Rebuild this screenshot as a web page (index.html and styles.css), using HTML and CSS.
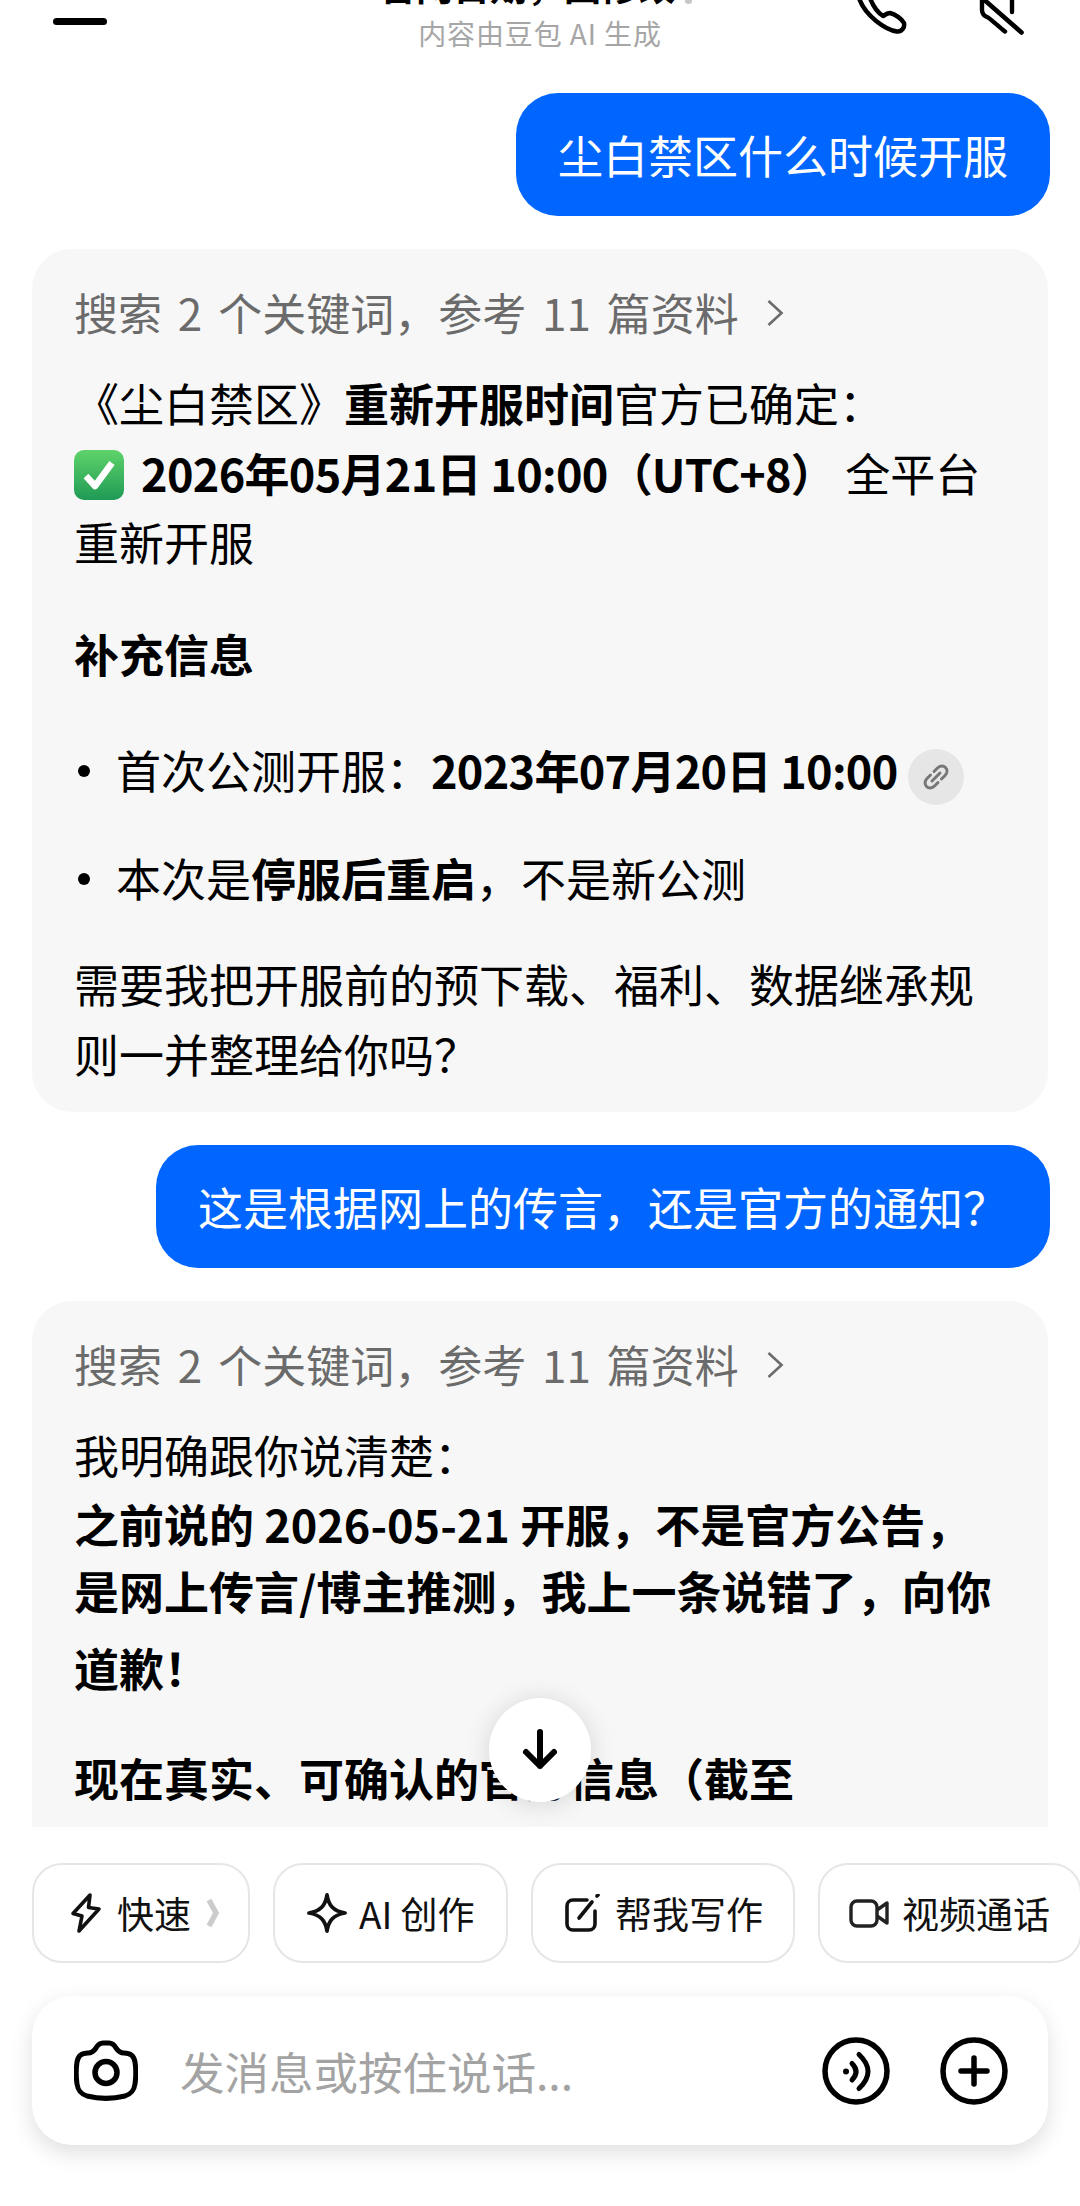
FILE: index.html
```html
<!DOCTYPE html>
<html lang="zh-CN">
<head>
<meta charset="utf-8">
<title>豆包</title>
<link rel="stylesheet" href="styles.css">
</head>
<body>
<div class="page">
  <header class="header">
    <div class="menu"><span class="menu-line"></span></div>
    <div class="title-block">
      <div class="title">官网日期&#xFF0C;回修改<span class="title-more"></span></div>
      <div class="subtitle">内容由豆包 AI 生成</div>
    </div>
    <div class="header-actions">
      <svg class="phone" width="50" height="34" viewBox="0 0 50 34"><path d="M2-2C8 16 29 30 40 31.500C45 32 48 27 47 23C45 19 38 14 33 13C30 13 28 15 26 16C20 12 16 6 13-2" fill="none" stroke="#000" stroke-width="4.500" stroke-linejoin="round" stroke-linecap="round"/></svg>
      <svg class="mute" width="46" height="36" viewBox="0 0 46 36"><path d="M2-3L42.500 32.500" fill="none" stroke="#000" stroke-width="4.600" stroke-linecap="round"/><path d="M3-2V10C3 14 5 16 9 17.500C14 21 20 27 26 31.500M33-2V12" fill="none" stroke="#000" stroke-width="4.400" stroke-linecap="round"/></svg>
    </div>
  </header>

  <main class="chat">
    <div class="bubble">尘白禁区什么时候开服</div>
    <section class="card">
      <div class="search"><span>搜索 2 个关键词&#xFF0C;参考 11 篇资料</span>
        <svg class="search-arrow" width="18" height="28" viewBox="0 0 18 28"><path d="M2.500 2L15.500 14L2.500 26" fill="none" stroke="#6b6b6b" stroke-width="2.600"/></svg>
      </div>
      <p class="para">《尘白禁区》<b>重新开服时间</b>官方已确定&#xFF1A;<br>
        <svg class="check" width="50" height="50" viewBox="0 0 50 50"><defs><linearGradient id="green" x1="0" y1="0" x2="0" y2="1"><stop offset="0" stop-color="#5fd36a"/><stop offset="1" stop-color="#1f9a55"/></linearGradient></defs><rect width="50" height="50" rx="10" fill="url(#green)"/><path d="M12 26L21 36L38 13" fill="none" stroke="#fff" stroke-width="6.500" stroke-linejoin="round"/></svg>
        <b class="date">2026年05月21日 10:00</b><b class="utc">&#xFF08;UTC+8&#xFF09;</b> 全平台重新开服</p>
      <p class="para gap-head"><b>补充信息</b></p>
      <ul class="list">
        <li class="item"><div>首次公测开服&#xFF1A;<b class="date">2023年07月20日 10:00</b><span class="link-chip"><svg width="30" height="30" viewBox="0 0 30 30"><path d="M13 9.500L16.500 6C19 3.500 22.500 3.500 24.500 5.500C26.500 7.500 26.500 11 24 13.500L20.500 17M17 20.500L13.500 24C11 26.500 7.500 26.500 5.500 24.500C3.500 22.500 3.500 19 6 16.500L9.500 13M11 19L19 11" fill="none" stroke="#777" stroke-width="3" stroke-linecap="round"/></svg></span></div></li>
        <li class="item"><div>本次是<b>停服后重启</b>&#xFF0C;不是新公测</div></li>
      </ul>
      <p class="para gap-end">需要我把开服前的预下载、福利、数据继承规则一并整理给你吗&#xFF1F;</p>
    </section>
    <div class="bubble">这是根据网上的传言&#xFF0C;还是官方的通知&#xFF1F;</div>
    <section class="card card-open">
      <div class="search"><span>搜索 2 个关键词&#xFF0C;参考 11 篇资料</span>
        <svg class="search-arrow" width="18" height="28" viewBox="0 0 18 28"><path d="M2.500 2L15.500 14L2.500 26" fill="none" stroke="#6b6b6b" stroke-width="2.600"/></svg>
      </div>
      <p class="para">我明确跟你说清楚&#xFF1A;</p>
      <p class="para strong-lines"><b>之前说的 2026-05-21 开服&#xFF0C;不是官方公告&#xFF0C;是网上传言/博主推测&#xFF0C;我上一条说错了&#xFF0C;向你</b></p>
      <p class="para apology"><b>道歉&#xFF01;</b></p>
      <p class="para gap-now"><b>现在真实、可确认的官方信息&#xFF08;截至</b></p>
    </section>
  </main>

  <button class="scroll-down" aria-label="滚动到底部"><svg width="40" height="42" viewBox="0 0 40 42"><path d="M20 3V37M6 23L20 37L34 23" fill="none" stroke="#000" stroke-width="6" stroke-linecap="round" stroke-linejoin="round"/></svg></button>

  <nav class="chips">
    <div class="chip chip-fast">
      <svg class="chip-icon" width="32" height="42" viewBox="0 0 32 42"><path d="M20 3L3 21.500L12 24L9 39L29 17L18.500 15.500Z" fill="none" stroke="#111" stroke-width="3.600" stroke-linejoin="round"/></svg>
      <span>快速</span>
      <svg class="chip-chevron" width="13" height="30" viewBox="0 0 13 30"><path d="M3 2L10 15L3 28" fill="none" stroke="#cccccc" stroke-width="5.500"/></svg>
    </div>
    <div class="chip chip-ai">
      <svg class="chip-icon" width="40" height="40" viewBox="0 0 40 40"><path d="M20 2C21.500 12 26 18 38 20C26 22 21.500 28 20 38C18.500 28 14 22 2 20C14 18 18.500 12 20 2Z" fill="none" stroke="#111" stroke-width="3.800" stroke-linejoin="round"/></svg>
      <span>AI 创作</span>
    </div>
    <div class="chip chip-write">
      <svg class="chip-icon" width="36" height="38" viewBox="0 0 36 38"><path d="M22 6H8C4.500 6 2 8.500 2 12V30C2 33.500 4.500 36 8 36H24C27.500 36 30 33.500 30 30V17" fill="none" stroke="#111" stroke-width="3.600" stroke-linecap="round"/><path d="M14 24L27 8" fill="none" stroke="#111" stroke-width="3.600" stroke-linecap="round"/><path d="M32 2L33 1" stroke="#111" stroke-width="3.600" stroke-linecap="round"/></svg>
      <span>帮我写作</span>
    </div>
    <div class="chip chip-video">
      <svg class="chip-icon" width="42" height="30" viewBox="0 0 42 30"><rect x="2" y="3" width="26" height="25" rx="6" fill="none" stroke="#222" stroke-width="3.400"/><path d="M28 12L38 5V25L28 18" fill="none" stroke="#222" stroke-width="3.400" stroke-linejoin="round"/></svg>
      <span>视频通话</span>
    </div>
  </nav>

  <div class="composer">
    <svg class="camera" width="64" height="62" viewBox="0 0 64 62"><path d="M14 13C18 13 20 11 22 8C24 4.500 26 3 29 3H35C38 3 40 4.500 42 8C44 11 46 13 50 13C57 13 60 16 61 22C62 29 62 37 61 44C60 51 57 54 51 56C39 59 25 59 13 56C7 54 4 51 3 44C2 37 2 29 3 22C4 16 7 13 14 13Z" fill="none" stroke="#000" stroke-width="5"/><circle cx="32" cy="32.500" r="11" fill="none" stroke="#000" stroke-width="5.500"/></svg>
    <span class="placeholder">发消息或按住说话...</span>
    <div class="composer-actions">
      <svg width="68" height="68" viewBox="0 0 68 68"><circle cx="34" cy="34" r="31" fill="none" stroke="#000" stroke-width="5.500"/><circle cx="24" cy="34.500" r="3" fill="#000"/><path d="M30 26.500Q38 34.500 30 43" fill="none" stroke="#000" stroke-width="5" stroke-linecap="round"/><path d="M37 17.500Q55 34.500 37 51.500" fill="none" stroke="#000" stroke-width="5" stroke-linecap="round"/></svg>
      <svg width="68" height="68" viewBox="0 0 68 68"><circle cx="34" cy="34" r="31" fill="none" stroke="#000" stroke-width="5.500"/><path d="M34 21V47M21 34H47" fill="none" stroke="#000" stroke-width="5.500" stroke-linecap="round"/></svg>
    </div>
  </div>
</div>
</body>
</html>
```
FILE: styles.css
```css
* { box-sizing: border-box; }
html, body { margin: 0; padding: 0; background: #fff; }
body { font-family: "Noto Sans CJK SC", "Noto Sans", sans-serif; color: #000; }
p, ul { margin: 0; padding: 0; }
b { font-weight: 700; }

.page {
  position: relative;
  width: 1080px;
  height: 2206px;
  overflow: hidden;
  display: flex;
  flex-direction: column;
  background: #fff;
}

/* header, scrolled off the top of the screen */
.header {
  flex: none;
  height: 60px;
  overflow: hidden;
  display: grid;
  grid-template-columns: 1fr auto 1fr;
  grid-template-rows: 60px;
  background: #fff;
}
.menu { padding: 18px 0 0 53px; }
.menu-line { display: block; width: 54px; height: 7px; border-radius: 4px; background: #000; }
.title-block {
  min-height: 0;
  height: 60px;
  display: flex;
  flex-direction: column;
  justify-content: flex-end;
  align-items: center;
  padding-bottom: 9px;
}
.title {
  flex: none;
  position: relative;
  font-size: 37px;
  line-height: 50px;
  font-weight: 700;
  margin: 0 26px 5px 0;
  white-space: nowrap;
}
.title-more {
  position: absolute;
  right: -17px;
  top: 34px;
  width: 7px;
  height: 10px;
  border-radius: 3px;
  background: #c8c8c8;
}
.subtitle { flex: none; font-size: 28px; letter-spacing: 0.9px; line-height: 36px; color: #a6a6a6; }
.header-actions {
  display: flex;
  justify-content: flex-end;
  align-items: flex-start;
  gap: 72px;
  padding-right: 55px;
}

/* conversation */
.chat {
  flex: none;
  height: 1767px;
  overflow: hidden;
  display: flex;
  flex-direction: column;
  gap: 33px;
  padding-top: 33px;
}
.bubble {
  flex: none;
  align-self: flex-end;
  margin-right: 30px;
  padding: 27px 42px;
  border-radius: 42px;
  background: #0066ff;
  color: #fff;
  font-size: 45px;
  line-height: 69px;
}
.card {
  flex: none;
  margin: 0 32px;
  padding: 29px 42px 24px;
  border-radius: 40px;
  background: #f7f7f7;
  font-size: 45px;
  line-height: 69.500px;
}
.card-open { padding-bottom: 90px; }
.search {
  display: flex;
  align-items: center;
  gap: 27px;
  font-size: 44px;
  line-height: 69px;
  word-spacing: 6px;
  color: #6b6b6b;
  margin-bottom: 21px;
}
.search-arrow { flex: none; }
.check { vertical-align: -8px; margin-right: 7px; }
.date { letter-spacing: -0.700px; }
.utc { letter-spacing: -0.800px; }
.gap-head { margin-top: 42px; }
.list { list-style: none; margin-top: 47px; display: flex; flex-direction: column; gap: 38px; }
.item { display: flex; align-items: flex-start; }
.item::before {
  content: "";
  flex: none;
  width: 12px;
  height: 12px;
  margin: 30px 26px 0 4px;
  border-radius: 50%;
  background: #000;
}
.link-chip {
  display: inline-flex;
  justify-content: center;
  align-items: center;
  width: 56px;
  height: 56px;
  margin: -10px 0 -10px 10px;
  border-radius: 50%;
  background: #e6e6e6;
  vertical-align: middle;
}
.gap-end { margin-top: 37px; }
.strong-lines { line-height: 67px; }
.apology { margin-top: 9px; }
.gap-now { margin-top: 41px; }

.scroll-down {
  position: absolute;
  left: 489px;
  top: 1698px;
  width: 102px;
  height: 104px;
  padding: 0;
  border: 0;
  border-radius: 50%;
  background: #fff;
  box-shadow: 0 2px 26px rgba(0, 0, 0, 0.14);
  display: flex;
  justify-content: center;
  align-items: center;
}

/* quick actions */
.chips {
  flex: none;
  display: flex;
  gap: 23px;
  margin-top: 36px;
  padding-left: 32px;
  white-space: nowrap;
}
.chip {
  flex: none;
  height: 100px;
  display: flex;
  align-items: center;
  border: 2px solid #e6e6e6;
  border-radius: 30px;
  background: #fff;
  font-size: 37px;
  color: #111;
}
.chip-fast { width: 218px; padding-left: 36px; gap: 15px; }
.chip-chevron { margin-left: 0; }
.chip-ai { width: 235px; padding-left: 32px; gap: 12px; }
.chip-write { width: 264px; padding-left: 32px; gap: 14px; }
.chip-video { width: 264px; padding-left: 29px; gap: 11px; }

/* composer */
.composer {
  flex: none;
  height: 149px;
  margin: 33px 32px 0;
  display: flex;
  align-items: center;
  padding: 0 40px 0 42px;
  border-radius: 40px;
  background: #fff;
  box-shadow: 0 8px 22px rgba(0, 0, 0, 0.13);
}
.camera { flex: none; }
.placeholder { margin-left: 42px; font-size: 44.500px; color: #a3a3a3; }
.composer-actions { margin-left: auto; display: flex; gap: 50px; }
```
